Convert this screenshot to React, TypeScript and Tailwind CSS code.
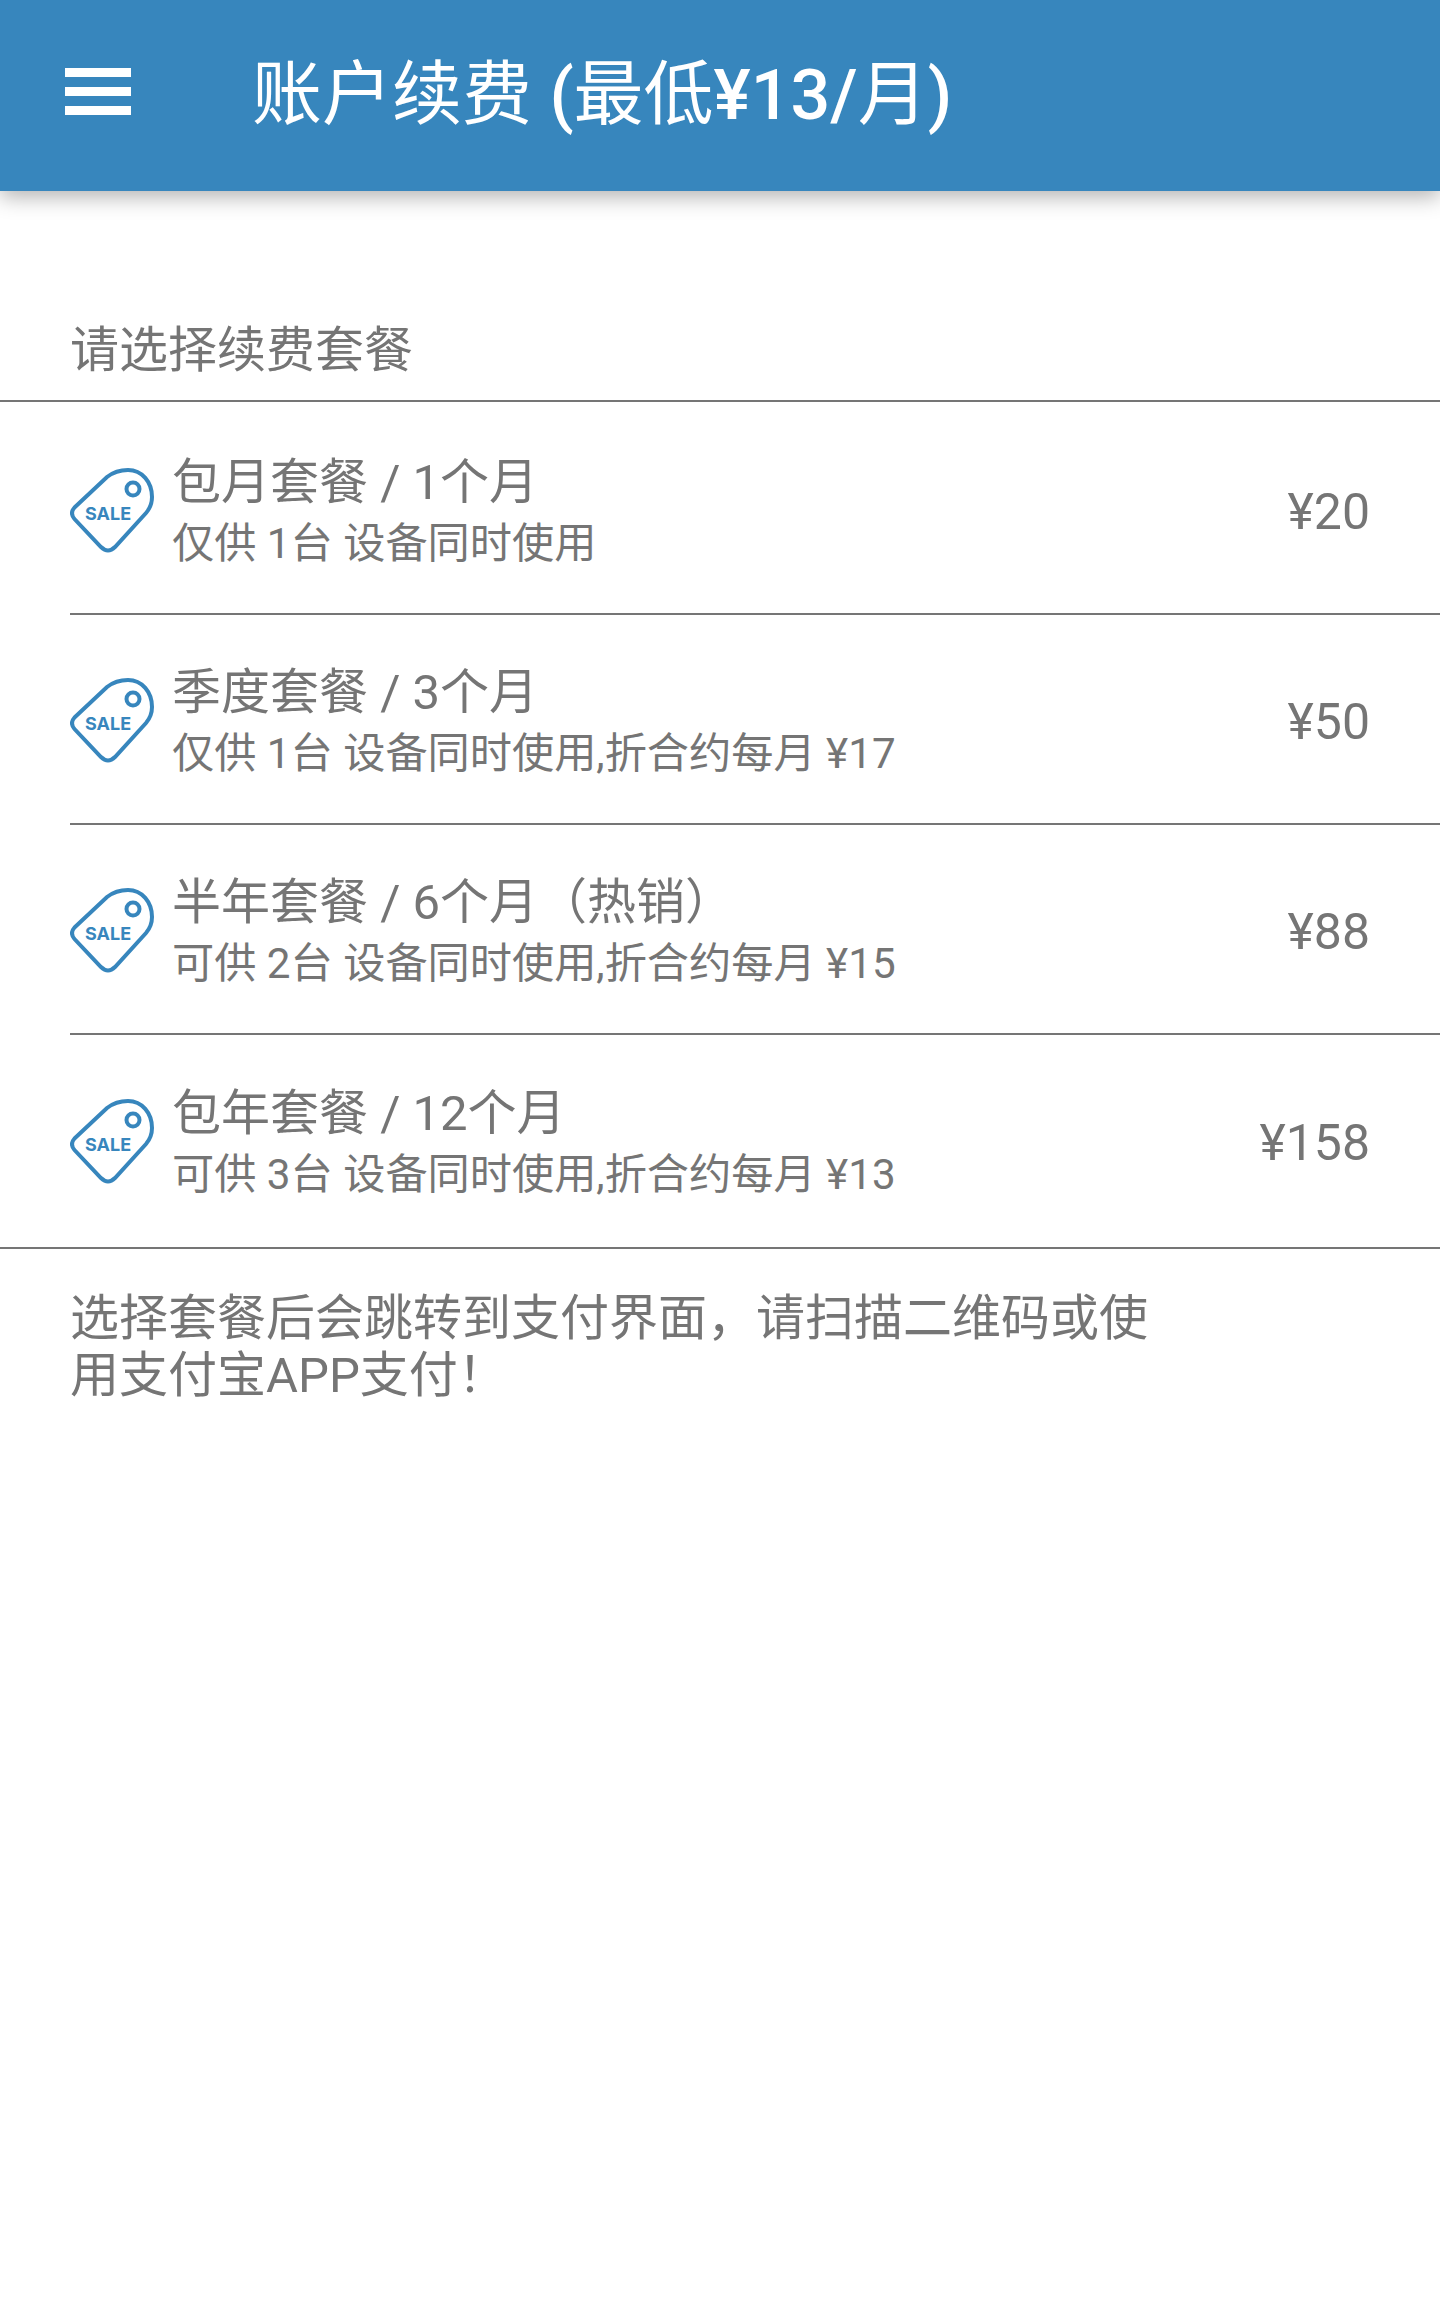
const FONT = "font-['Roboto','Noto_Sans_CJK_SC',sans-serif]"

const plans = [
  { title: '包月套餐 / 1个月', desc: '仅供 1台 设备同时使用', price: '¥20' },
  { title: '季度套餐 / 3个月', desc: '仅供 1台 设备同时使用,折合约每月 ¥17', price: '¥50' },
  { title: '半年套餐 / 6个月（热销）', desc: '可供 2台 设备同时使用,折合约每月 ¥15', price: '¥88' },
  { title: '包年套餐 / 12个月', desc: '可供 3台 设备同时使用,折合约每月 ¥13', price: '¥158' },
]

function SaleTag() {
  return (
    <svg viewBox="0 0 84 86" className="w-[84px] h-[86px] shrink-0" fill="none">
      <path
        d="M4.5 39.5 L37 9 Q46 2 58 2 C72 2 82 14 82 29 Q82 38 76 45 L45 79 Q38 86 31 79 L4.5 51 Q-0.5 45 4.5 39.5 Z"
        stroke="#3786bd"
        strokeWidth="4"
      />
      <circle cx="63" cy="21" r="6.5" stroke="#3786bd" strokeWidth="4" />
      <text x="15" y="52" fontFamily="Inter, sans-serif" fontWeight="700" fontSize="18" fill="#3786bd">
        SALE
      </text>
    </svg>
  )
}

export default function App() {
  return (
    <div className={`${FONT} min-h-[2301px] bg-white text-[#757575]`}>
      <header className="h-[191px] bg-[#3786bd] flex items-center pl-[65px] text-white shadow-[0_6px_20px_rgba(0,0,0,0.3)]">
        <div className="w-[66px] flex flex-col gap-[10px] mb-[8px]">
          <span className="h-[9px] bg-white" />
          <span className="h-[9px] bg-white" />
          <span className="h-[9px] bg-white" />
        </div>
        <h1 className="ml-[121px] mb-[2px] text-[70px] leading-none font-normal whitespace-nowrap">
          账户续费 <span className="font-medium">(</span>最低<span className="font-medium">¥13/</span>月<span className="font-medium">)</span>
        </h1>
      </header>

      <div className="h-[211px] flex items-end px-[70px] pb-[21px] text-[49px] leading-[57px] border-b-2 border-[#757575]">
        请选择续费套餐
      </div>

      <div className="pt-[3px] pb-[2px] border-b-2 border-[#757575]">
        {plans.map((plan, i) => (
          <div key={plan.title} className="pl-[70px]">
            <div
              className={`h-[210px] pt-[3px] flex items-center pr-[70px] ${i < plans.length - 1 ? 'border-b-2 border-[#757575]' : ''}`}
            >
              <SaleTag />
              <div className="ml-[18px] flex-1 pt-[3px]">
                <div className="text-[49px] leading-[64px] whitespace-nowrap">{plan.title}</div>
                <div className="text-[42.2px] leading-[58px] whitespace-nowrap">{plan.desc}</div>
              </div>
              <div className="text-[50px] leading-none pt-[2px]">{plan.price}</div>
            </div>
          </div>
        ))}
      </div>

      <p className="mt-[41px] px-[70px] w-[1220px] text-[49px] leading-[57px]">
        选择套餐后会跳转到支付界面，请扫描二维码或使用支付宝APP支付！
      </p>
    </div>
  )
}
